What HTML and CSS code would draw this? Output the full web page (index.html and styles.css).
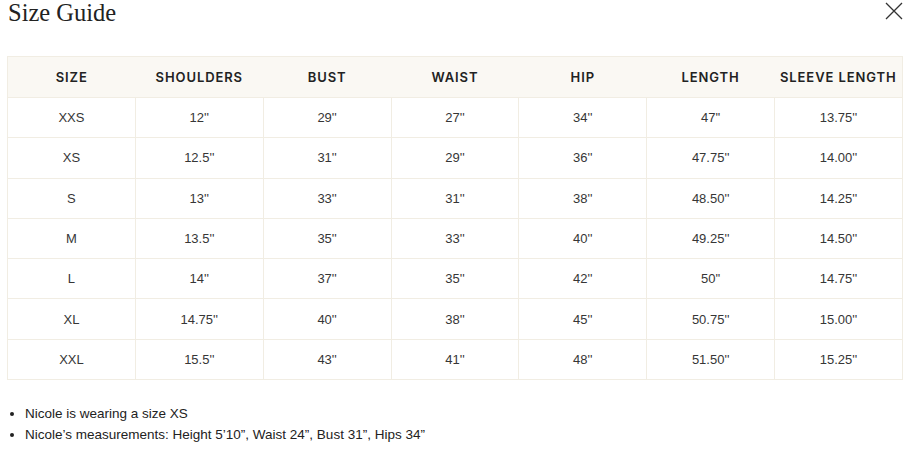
FILE: index.html
```html
<!DOCTYPE html>
<html lang="en">
<head>
<meta charset="utf-8">
<title>Size Guide</title>
<link rel="stylesheet" href="styles.css">
</head>
<body>
<div class="modal">
  <div class="head">
    <h1 class="title">Size Guide</h1>
    <button class="close" aria-label="Close">
      <svg width="18" height="18" viewBox="0 0 18 18"><path d="M1 1L17 17M17 1L1 17" stroke="#333" stroke-width="1.3" fill="none"/></svg>
    </button>
  </div>
  <table class="sizes">
    <thead>
      <tr><th>SIZE</th><th>SHOULDERS</th><th>BUST</th><th>WAIST</th><th>HIP</th><th>LENGTH</th><th>SLEEVE LENGTH</th></tr>
    </thead>
    <tbody>
      <tr><td>XXS</td><td>12''</td><td>29''</td><td>27''</td><td>34''</td><td>47''</td><td>13.75''</td></tr>
      <tr><td>XS</td><td>12.5''</td><td>31''</td><td>29''</td><td>36''</td><td>47.75''</td><td>14.00''</td></tr>
      <tr><td>S</td><td>13''</td><td>33''</td><td>31''</td><td>38''</td><td>48.50''</td><td>14.25''</td></tr>
      <tr><td>M</td><td>13.5''</td><td>35''</td><td>33''</td><td>40''</td><td>49.25''</td><td>14.50''</td></tr>
      <tr><td>L</td><td>14''</td><td>37''</td><td>35''</td><td>42''</td><td>50''</td><td>14.75''</td></tr>
      <tr><td>XL</td><td>14.75''</td><td>40''</td><td>38''</td><td>45''</td><td>50.75''</td><td>15.00''</td></tr>
      <tr><td>XXL</td><td>15.5''</td><td>43''</td><td>41''</td><td>48''</td><td>51.50''</td><td>15.25''</td></tr>
    </tbody>
  </table>
  <ul class="notes">
    <li>Nicole is wearing a size XS</li>
    <li>Nicole’s measurements: Height 5’10”, Waist 24”, Bust 31”, Hips 34”</li>
  </ul>
</div>
</body>
</html>
```

FILE: styles.css
```css
html, body {
  margin: 0;
  padding: 0;
  background: #fff;
}
.modal {
  padding: 0 12px 0 7px;
  color: #222;
}
.head {
  display: flex;
  justify-content: space-between;
  align-items: flex-start;
  height: 56px;
}
.title {
  margin: 0 0 0 1px;
  font-family: "Liberation Serif", "Times New Roman", serif;
  font-weight: 400;
  font-size: 24.5px;
  line-height: 26px;
  color: #222;
}
.close {
  margin: 2px 0 0 0;
  padding: 0;
  border: 0;
  background: none;
  width: 18px;
  height: 18px;
  cursor: pointer;
}
.close svg { display: block; }
.sizes {
  width: 896px;
  table-layout: fixed;
  border-collapse: collapse;
  border: 1px solid #f1ede3;
}
.sizes th {
  height: 40px;
  padding: 0;
  background: #faf8f3;
  font-family: Inter, "Liberation Sans", sans-serif;
  font-weight: 600;
  font-size: 13px;
  letter-spacing: 0.9px;
  color: #222;
  text-align: center;
}
.sizes td {
  height: 39.3px;
  padding: 0;
  border: 1px solid #f1ede3;
  font-family: "Liberation Sans", Arial, sans-serif;
  font-size: 13px;
  color: #363636;
  text-align: center;
}
.notes {
  margin: 23px 0 0 0;
  padding-left: 18px;
  font-family: "Liberation Sans", Arial, sans-serif;
  font-size: 13.5px;
  line-height: 21px;
  color: #222;
}
```
